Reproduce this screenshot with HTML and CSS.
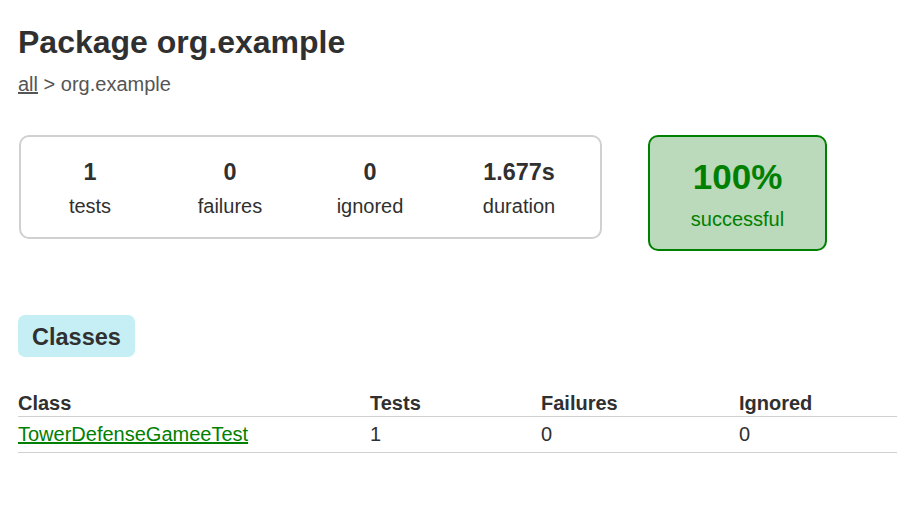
FILE: index.html
```html
<!DOCTYPE html>
<html>
<head>
<meta charset="utf-8">
<title>Test results - Package org.example</title>
<link rel="stylesheet" href="styles.css">
</head>
<body>
<div class="content">
  <h1 class="title">Package org.example</h1>
  <div class="breadcrumbs"><a href="#" class="crumb-link">all</a> &gt; org.example</div>

  <div class="summary-row">
    <div class="summary">
      <div class="info-box w-normal">
        <div class="counter">1</div>
        <p class="label">tests</p>
      </div>
      <div class="info-box w-normal">
        <div class="counter">0</div>
        <p class="label">failures</p>
      </div>
      <div class="info-box w-normal">
        <div class="counter">0</div>
        <p class="label">ignored</p>
      </div>
      <div class="info-box w-wide">
        <div class="counter">1.677s</div>
        <p class="label">duration</p>
      </div>
    </div>
    <div class="success-rate">
      <div class="percent">100%</div>
      <p class="label success-label">successful</p>
    </div>
  </div>

  <div class="tabs">
    <span class="tab">Classes</span>
  </div>

  <table class="results">
    <colgroup>
      <col class="col-class">
      <col class="col-tests">
      <col class="col-failures">
      <col class="col-ignored">
    </colgroup>
    <thead>
      <tr>
        <th>Class</th>
        <th>Tests</th>
        <th>Failures</th>
        <th>Ignored</th>
      </tr>
    </thead>
    <tbody>
      <tr>
        <td><a href="#" class="class-link">TowerDefenseGameeTest</a></td>
        <td>1</td>
        <td>0</td>
        <td>0</td>
      </tr>
    </tbody>
  </table>
</div>
</body>
</html>
```

FILE: styles.css
```css
html, body {
  margin: 0;
  padding: 0;
  background: #ffffff;
}

body {
  font-family: "Liberation Sans", Arial, sans-serif;
  font-size: 20px;
  color: #303030;
}

.content {
  padding: 22px 0 0 18px;
}

.title {
  margin: 0;
  font-size: 32px;
  line-height: 40px;
  font-weight: bold;
  color: #303030;
}

.breadcrumbs {
  margin-top: 10px;
  font-size: 20px;
  line-height: 24px;
  color: #555555;
}

.crumb-link {
  color: #555555;
  text-decoration: underline;
}

.summary-row {
  display: flex;
  align-items: flex-start;
  margin-top: 39px;
  margin-left: 1px;
}

.summary {
  display: flex;
  gap: 2px;
  border: 2px solid #d0d0d0;
  border-radius: 10px;
  padding: 0 3px 0 0;
  height: 100px;
}

.info-box {
  text-align: center;
  padding-top: 21px;
  box-sizing: border-box;
}

.w-normal {
  width: 138px;
}

.w-wide {
  width: 156px;
}

.counter {
  font-size: 23.4px;
  line-height: 28px;
  font-weight: bold;
}

.label {
  margin: 8px 0 0 0;
  font-size: 20px;
  line-height: 24px;
}

.success-rate {
  margin-left: 46px;
  width: 175px;
  height: 112px;
  box-sizing: content-box;
  border: 2px solid #008000;
  border-radius: 10px;
  background: #bbd9bb;
  color: #008000;
  text-align: center;
}

.percent {
  margin-top: 20px;
  font-size: 35px;
  line-height: 40px;
  font-weight: bold;
}

.success-label {
  margin-top: 10px;
  color: #008000;
}

.tabs {
  margin-top: 64px;
}

.tab {
  display: inline-block;
  background: #c5eff5;
  border-radius: 7px;
  padding: 1px 14px 0 14px;
  height: 41px;
  line-height: 42px;
  font-size: 23.5px;
  font-weight: bold;
  color: #303030;
}

.results {
  margin-top: 34px;
  width: 879px;
  border-collapse: collapse;
  table-layout: fixed;
}

.col-class { width: 352px; }
.col-tests { width: 171px; }
.col-failures { width: 198px; }
.col-ignored { width: 158px; }

.results th {
  text-align: left;
  font-weight: bold;
  font-size: 20px;
  line-height: 24px;
  padding: 0 0 1px 0;
  border-bottom: 1px solid #d0d0d0;
}

.results td {
  text-align: left;
  font-size: 20px;
  line-height: 24px;
  padding: 5px 0 6px 0;
  border-bottom: 1px solid #d0d0d0;
}

.class-link {
  color: #008000;
  text-decoration: underline;
}
```
